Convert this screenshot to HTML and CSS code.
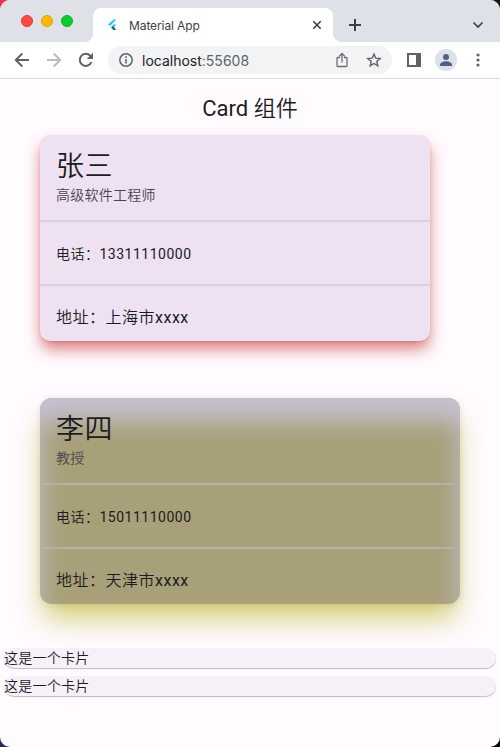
FILE: index.html
```html
<!DOCTYPE html>
<html lang="zh-CN">
<head>
<meta charset="utf-8">
<title>Material App</title>
<link rel="stylesheet" href="styles.css">
</head>
<body>
<div class="window">
  <header class="tabs">
    <div class="lights"><i class="light red"></i><i class="light yellow"></i><i class="light green"></i></div>
    <div class="tab">
      <svg class="flutter" width="12" height="14" viewBox="0 0 12 14"><path d="M6.5 1.5H9.3L3 8 1 6.5z" fill="#35bdf8"/><path d="M6.5 6.5H9.3L6.5 9.5 4 9.5z" fill="#25b4f5"/><path d="M4 9.5 6.5 8.5 9.3 12H6.5z" fill="#155a9d"/></svg>
      <span class="tab-title">Material App</span>
      <svg class="close" width="10" height="10" viewBox="0 0 10 10"><path d="M1.3 1.3l7.4 7.4M8.7 1.3L1.3 8.7" fill="none" stroke="#3c4043" stroke-width="1.6"/></svg>
    </div>
    <svg class="plus" width="14" height="14" viewBox="0 0 14 14"><path d="M7 1v12M1 7h12" stroke="#3c4043" stroke-width="2"/></svg>
    <svg class="chevron" width="12" height="8" viewBox="0 0 12 8"><path d="M1.5 1.5L6 6l4.5-4.5" fill="none" stroke="#3c4043" stroke-width="1.7"/></svg>
  </header>
  <nav class="toolbar">
    <svg class="back" width="16" height="16" viewBox="0 0 16 16"><path d="M15 8H2M8.3 1.5L1.8 8l6.5 6.5" fill="none" stroke="#5f6368" stroke-width="2"/></svg>
    <svg class="forward" width="16" height="16" viewBox="0 0 16 16"><path d="M1 8h13M7.7 1.5L14.2 8l-6.5 6.5" fill="none" stroke="#babcbe" stroke-width="2"/></svg>
    <svg class="reload" width="16" height="16" viewBox="0 0 16 16"><path d="M13.4 10A6 6 0 1 1 12.2 3.8L14 5.6" fill="none" stroke="#5f6368" stroke-width="2"/><path d="M15 .8V7H8.8z" fill="#5f6368"/></svg>
    <div class="address">
      <svg width="14" height="14" viewBox="0 0 14 14"><circle cx="7" cy="7" r="6.2" fill="none" stroke="#5f6368" stroke-width="1.5"/><path d="M7 6v4.5M7 3.3v1.6" stroke="#5f6368" stroke-width="1.5"/></svg>
      <span class="url">localhost<span class="port">:55608</span></span>
      <svg class="share" width="12" height="16" viewBox="0 0 12 16"><path d="M4 5.5H1.7q-.7 0-.7.7v7.6q0 .7.7.7h8.6q.7 0 .7-.7V6.2q0-.7-.7-.7H8M6 10.5V2M3.2 4.3L6 1.5l2.8 2.8" fill="none" stroke="#6c7074" stroke-width="1.3"/></svg>
      <svg class="star" width="16" height="16" viewBox="0 0 16 16"><path d="M8 2l1.7 4.1 4.5.4-3.4 3 1 4.3L8 11.5l-3.8 2.3 1-4.3-3.4-3 4.5-.4z" fill="none" stroke="#5f6368" stroke-width="1.4"/></svg>
    </div>
    <svg class="panel" width="14" height="14" viewBox="0 0 14 14"><path d="M0 0h14v14H0zM2 2v10h7V2z" fill="#5f6368" fill-rule="evenodd"/></svg>
    <svg class="avatar" width="22" height="22" viewBox="0 0 22 22"><circle cx="11" cy="11" r="11" fill="#dde1e9"/><circle cx="11" cy="8" r="3" fill="#51617d"/><path d="M5 17v-1.5c0-2 3.5-3.3 6-3.3s6 1.3 6 3.3V17z" fill="#51617d"/></svg>
    <svg class="more" width="4" height="14" viewBox="0 0 4 14"><g fill="#5f6368"><circle cx="2" cy="2" r="1.6"/><circle cx="2" cy="7" r="1.6"/><circle cx="2" cy="12" r="1.6"/></g></svg>
  </nav>
  <main class="page">
    <h1>Card 组件</h1>
    <section class="card first">
      <div class="person"><h2>张三</h2><p>高级软件工程师</p></div>
      <div class="row phone">电话：13311110000</div>
      <div class="row place">地址：上海市xxxx</div>
    </section>
    <section class="card second">
      <div class="person"><h2>李四</h2><p>教授</p></div>
      <div class="row phone">电话：15011110000</div>
      <div class="row place">地址：天津市xxxx</div>
    </section>
    <div class="strip">这是一个卡片</div>
    <div class="strip">这是一个卡片</div>
  </main>
</div>
</body>
</html>
```
FILE: styles.css
```css
* { box-sizing: border-box; }
body {
  margin: 0;
  height: 747px;
  overflow: hidden;
  background: linear-gradient(90deg, #ed2f50 50%, #171719 50%) top / 100% 50% no-repeat,
    linear-gradient(90deg, #29285b 50%, #050505 50%) bottom / 100% 50% no-repeat;
  font-family: Roboto, "Noto Sans CJK SC DemiLight", "Noto Sans CJK SC", sans-serif;
}
svg { display: block; flex: none; }
.window { height: 747px; border-radius: 10px; overflow: hidden; background: #fffbff; }
.tabs { height: 42px; background: #dee1e8; display: flex; align-items: flex-start; }
.lights { display: flex; gap: 8px; padding: 15px 0 0 21px; width: 93px; }
.light { width: 12px; height: 12px; border-radius: 50%; border: 1px solid; }
.red { background: #ff4b41; border-color: #e7352d; }
.yellow { background: #ffba00; border-color: #e1a000; }
.green { background: #06cf2c; border-color: #05b423; }
.tab {
  position: relative;
  width: 240px;
  height: 34px;
  margin-top: 8px;
  background: #fff;
  border-radius: 8px 8px 0 0;
  display: flex;
  align-items: center;
  padding: 0 11px 0 14px;
}
.tab::before, .tab::after { content: ""; position: absolute; bottom: 0; width: 8px; height: 8px; }
.tab::before { left: -8px; background: radial-gradient(circle at 0 0, transparent 7.5px, #fff 8px); }
.tab::after { right: -8px; background: radial-gradient(circle at 100% 0, transparent 7.5px, #fff 8px); }
.tab-title { margin-left: 10px; font-family: Inter, sans-serif; font-size: 12px; letter-spacing: -.1px; color: #3c4043; }
.close { margin-left: auto; }
.plus { margin: 18px 0 0 15px; }
.chevron { margin: 21px 16px 0 auto; }
.toolbar { height: 37px; background: #fff; border-bottom: 1px solid #dadce0; display: flex; align-items: center; padding-left: 14px; }
.forward, .reload { margin-left: 16px; }
.address {
  width: 284px;
  height: 28px;
  margin-left: 14px;
  padding: 0 10px 0 11px;
  border-radius: 14px;
  background: #f1f3f4;
  display: flex;
  align-items: center;
}
.url { margin-left: 9px; font-family: Inter, sans-serif; font-size: 14px; color: #202124; }
.port { color: #5f6368; }
.share { margin-left: auto; }
.star { margin-left: 18px; }
.panel { margin-left: 15px; }
.avatar { margin-left: 14px; }
.more { margin-left: 19px; }
.page { display: flow-root; color: #1c1b1f; }
h1 { margin: 16px 0 12px; height: 28px; line-height: 28px; font-size: 22px; font-weight: 400; text-align: center; }
.card { margin-left: 40px; height: 206px; }
.first {
  width: 390px;
  border-radius: 10px;
  background: #ede1f2;
  box-shadow: 0 1px 2px rgba(110, 30, 40, .15), 0 9px 15px -1px rgba(202, 66, 58, .68);
}
.second {
  width: 420px;
  margin-top: 57px;
  border-radius: 12px;
  background: #a8a078;
  box-shadow: inset 0 22px 24px #c6c0d2, 0 1px 6px rgba(70, 60, 80, .12), 0 18px 28px -4px rgba(190, 180, 40, .66);
}
.person { height: 85px; padding: 13px 16px 0; }
h2 { margin: 0; height: 37px; line-height: 37px; font-size: 28px; font-weight: 400; letter-spacing: .4px; }
.person p { margin: 0; line-height: 20px; font-size: 14px; letter-spacing: .25px; color: #49454f; }
.row { padding: 0 16px; border-top: 2px solid #dcd0e1; }
.second .row { border-color: #b9aeac; }
.phone { height: 64px; line-height: 64px; font-size: 14px; letter-spacing: .5px; }
.place { height: 57px; line-height: 63px; font-size: 16px; letter-spacing: .5px; }
.strip {
  width: 492px;
  height: 20px;
  margin: 8px 4px 0;
  border-radius: 10px;
  background: #f6f0f8;
  box-shadow: 0 1px 1px rgba(0, 0, 0, .25);
  font-size: 14px;
  line-height: 21px;
  letter-spacing: .25px;
}
.second + .strip { margin-top: 44px; }
```
